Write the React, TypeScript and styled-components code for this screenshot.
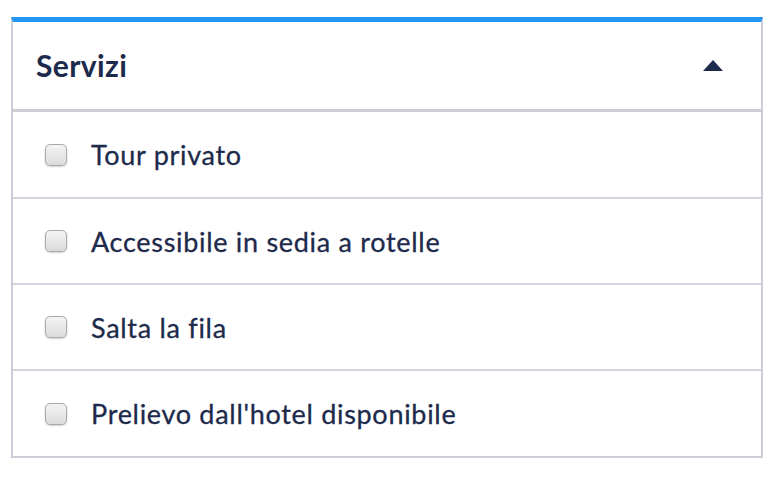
import React, { useState } from 'react';
import styled, { createGlobalStyle } from 'styled-components';

const GlobalStyle = createGlobalStyle`
  body {
    margin: 0;
    background: #ffffff;
    font-family: Lato, "Open Sans", sans-serif;
  }
`;

const Panel = styled.section`
  margin: 17px 0 0 11px;
  width: 752px;
  box-sizing: border-box;
  border: 2px solid #cecdd7;
  border-top: 5px solid #2196f3;
  background: #fff;
  color: #1d2a4b;
`;

const Header = styled.button`
  display: flex;
  align-items: center;
  justify-content: space-between;
  width: 100%;
  height: 90px;
  padding: 0 38px 0 23px;
  box-sizing: border-box;
  border: none;
  border-bottom: 3px solid #cecdd7;
  background: transparent;
  color: inherit;
  font-family: inherit;
  cursor: pointer;
`;

const Title = styled.h3`
  margin: 0 0 2px;
  font-size: 30px;
  font-weight: 700;
  letter-spacing: 0.4px;
`;

const Caret = styled.svg<{ $open: boolean }>`
  width: 20px;
  height: 11px;
  transform: ${(p) => (p.$open ? 'none' : 'rotate(180deg)')};
`;

const List = styled.ul`
  list-style: none;
  margin: 0;
  padding: 0;
`;

const Row = styled.li`
  display: flex;
  align-items: center;
  height: 86px;
  padding: 0 0 0 32px;
  box-sizing: border-box;
  border-top: 2px solid #d4d3dc;
  &:first-child {
    border-top: none;
    height: 85px;
  }
  &:last-child {
    height: 87px;
  }
`;

const Label = styled.label`
  display: flex;
  align-items: center;
  gap: 24px;
  font-size: 27px;
  font-weight: 400;
  letter-spacing: 0.7px;
  -webkit-text-stroke: 0.3px #1d2a4b;
  cursor: pointer;
`;

const Box = styled.input`
  appearance: none;
  margin: 0;
  width: 22px;
  height: 22px;
  border-radius: 5px;
  border: 1.5px solid #a9a9ad;
  background: linear-gradient(#f3f3f3, #dcdcdc);
  box-shadow: 0 1px 2px rgba(0, 0, 0, 0.18);
  &:checked {
    background: #2196f3;
    border-color: #2196f3;
  }
`;

const services = [
  'Tour privato',
  'Accessibile in sedia a rotelle',
  'Salta la fila',
  "Prelievo dall'hotel disponibile",
];

export default function App() {
  const [open, setOpen] = useState(true);

  return (
    <>
      <GlobalStyle />
      <Panel>
        <Header onClick={() => setOpen(!open)}>
          <Title>Servizi</Title>
          <Caret $open={open} viewBox="0 0 20 11">
            <path d="M10 0 L20 11 L0 11 Z" fill="#1d2a4b" />
          </Caret>
        </Header>
        {open && (
          <List>
            {services.map((s) => (
              <Row key={s}>
                <Label>
                  <Box type="checkbox" />
                  {s}
                </Label>
              </Row>
            ))}
          </List>
        )}
      </Panel>
    </>
  );
}
